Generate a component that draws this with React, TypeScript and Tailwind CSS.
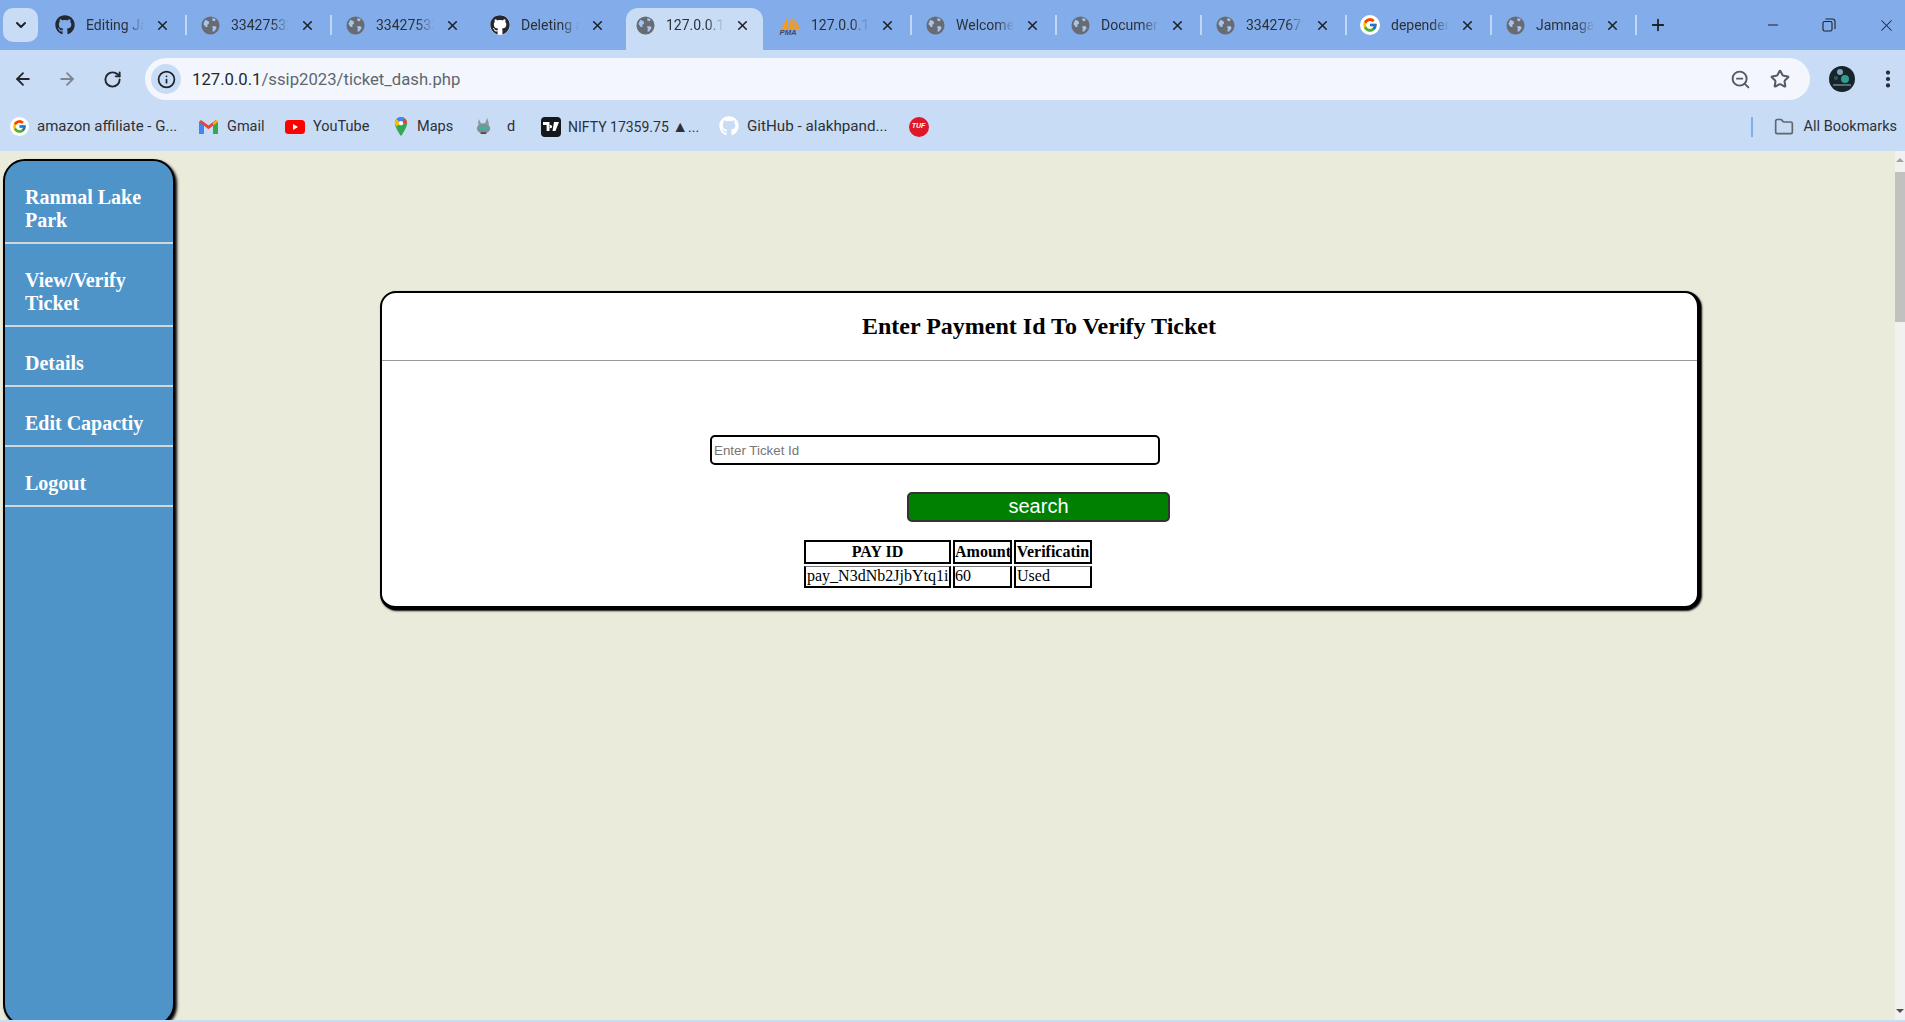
import { ArrowLeft, ArrowRight, RotateCw, Info, ZoomOut, Star, Folder, EllipsisVertical, X, Plus, Minus, ChevronDown } from "lucide-react";
import { FaGithub } from "react-icons/fa";
import { FcGoogle } from "react-icons/fc";

function Globe() {
  return (
    <svg viewBox="0 0 20 20" className="h-[19px] w-[19px] shrink-0">
      <circle cx="10" cy="10" r="9.5" fill="#686c72" />
      <path d="M4.5 4 8 5.5 8.5 8 6.5 9.5 7 11.5 5 11.5 2.5 8.5ZM12 2 15.5 3.5 14.5 5.5 12 5ZM11.5 11 15 10.5 16.5 12.5 13.5 16.5 12 16 12.5 13.5Z" fill="#a9c4ec" />
    </svg>
  );
}

function TabGithub() {
  return (
    <span className="flex h-[20px] w-[20px] shrink-0 items-center justify-center rounded-full bg-white">
      <FaGithub className="h-[20px] w-[20px] text-[#24292f]" />
    </span>
  );
}

function TabGoogle() {
  return (
    <span className="flex h-[20px] w-[20px] shrink-0 items-center justify-center rounded-full bg-white">
      <FcGoogle className="h-[16px] w-[16px]" />
    </span>
  );
}

function Pma() {
  return (
    <svg viewBox="0 0 20 20" className="h-[22px] w-[22px] shrink-0">
      <path d="M2 14 8 2 8.5 14ZM9 14 11.5 0 13.5 14ZM14 14 14 4 19.5 14Z" fill="#f39a1f" />
      <text x="0.5" y="19.5" fontSize="7" fontWeight="700" fontStyle="italic" fontFamily="Liberation Sans" fill="#3a4a70">PMA</text>
    </svg>
  );
}

const TABS = [
  { title: "Editing Jamnagar", icon: <FaGithub className="h-[20px] w-[20px] shrink-0 text-[#24292f]" />, sep: true },
  { title: "33427532", icon: <Globe />, sep: true },
  { title: "33427533", icon: <Globe />, sep: false },
  { title: "Deleting a", icon: <TabGithub />, sep: false },
  { title: "127.0.0.1", icon: <Globe />, sep: false, active: true },
  { title: "127.0.0.1", icon: <Pma />, sep: true },
  { title: "Welcome", icon: <Globe />, sep: true },
  { title: "Document", icon: <Globe />, sep: true },
  { title: "33427671", icon: <Globe />, sep: true },
  { title: "dependen", icon: <TabGoogle />, sep: true },
  { title: "Jamnagar", icon: <Globe />, sep: true },
];

const SIDE_LINKS = [
  "Ranmal Lake Park",
  "View/Verify Ticket",
  "Details",
  "Edit Capactiy",
  "Logout",
];

function TabBar() {
  return (
    <div className="flex h-[50px] items-end bg-[#83adea] pl-[3px] text-[#2c3138]">
      <div className="mb-[8px] mr-[4px] flex h-[34px] w-[35px] items-center justify-center rounded-[10px] bg-[#c9dcf6]">
        <ChevronDown className="h-[16px] w-[16px] text-[#1f2329]" strokeWidth={3} />
      </div>
      {TABS.map((tab, i) => (
        <div key={i} className="relative flex h-[42px] w-[145px] shrink-0 items-center pb-[8px]">
          {tab.active && (
            <div className="absolute inset-y-0 left-[4px] right-[4px] rounded-t-[12px] bg-[#c9dcf6]" />
          )}
          <div className="relative ml-[13px] flex w-[128px] items-center">
            <span className="flex w-[20px] justify-center">{tab.icon}</span>
            <span className="ml-[11px] w-[58px] overflow-hidden whitespace-nowrap text-[14px] [mask-image:linear-gradient(to_right,black_70%,transparent)]">
              {tab.title}
            </span>
            <X className="ml-[11px] h-[15px] w-[15px] shrink-0 text-[#20242a]" strokeWidth={2.6} />
          </div>
          {tab.sep && <div className="absolute right-0 top-[7px] h-[20px] w-[2px] bg-[#c2d6f5]" />}
        </div>
      ))}
      <div className="mb-[8px] ml-[12px] flex h-[34px] items-center">
        <Plus className="h-[18px] w-[18px] text-[#1f2329]" strokeWidth={2.4} />
      </div>
      <div className="mb-[8px] ml-auto flex h-[34px] items-center gap-[41px] pr-[9px]">
        <Minus className="h-[16px] w-[16px] text-[#1f2329]" strokeWidth={1.6} />
        <svg viewBox="0 0 14 14" className="h-[14px] w-[14px]" fill="none" stroke="#1f2329" strokeWidth="1.1">
          <rect x="1" y="3.5" width="9" height="9.5" rx="1.5" />
          <path d="M3.5 1h7a2.5 2.5 0 0 1 2.5 2.5V11" />
        </svg>
        <X className="h-[19px] w-[19px] text-[#1f2329]" strokeWidth={1.3} />
      </div>
    </div>
  );
}

function Toolbar() {
  return (
    <div className="flex h-[50px] items-end bg-[#c9dcf6]">
      <div className="mb-[11px] flex w-[145px] items-center pl-[13px] text-[#23272d]">
        <ArrowLeft className="h-[20px] w-[20px]" strokeWidth={2.2} />
        <ArrowRight className="ml-[24px] h-[20px] w-[20px] text-[#7f8691]" strokeWidth={2.2} />
        <RotateCw className="ml-[26px] h-[19px] w-[19px]" strokeWidth={2.4} />
      </div>
      <div className="flex h-[42px] w-[1665px] items-center rounded-full bg-[#f3f7fd] pl-[6px]">
        <span className="flex h-[30px] w-[30px] items-center justify-center rounded-full bg-[#c9dcf6]">
          <Info className="h-[19px] w-[19px] text-[#1f2329]" strokeWidth={2.2} />
        </span>
        <span className="ml-[11px] pt-[1px] font-['Roboto',sans-serif] text-[16.7px] text-[#5f6670]">
          <span className="text-[#23272d]">127.0.0.1</span>/ssip2023/ticket_dash.php
        </span>
        <ZoomOut className="ml-auto h-[21px] w-[21px] text-[#555a61]" strokeWidth={2.2} />
        <Star className="ml-[19px] mr-[20px] h-[20px] w-[20px] text-[#555a61]" strokeWidth={2.4} />
      </div>
      <svg viewBox="0 0 26 26" className="mb-[8px] ml-[19px] h-[26px] w-[26px]">
        <circle cx="13" cy="13" r="13" fill="#16242b" />
        <circle cx="16" cy="13" r="4" fill="#2f9c8f" />
        <circle cx="11" cy="6" r="3" fill="#7fa2b4" />
        <rect x="4" y="18" width="18" height="2" fill="#5a6b73" />
        <circle cx="7" cy="12" r="2" fill="#33535f" />
      </svg>
      <EllipsisVertical className="mb-[10px] ml-[22px] h-[22px] w-[22px] text-[#23272d]" strokeWidth={2.6} />
    </div>
  );
}

function BookmarkBar() {
  return (
    <div className="flex h-[51px] items-center bg-[#c9dcf6] pt-[2px] text-[14.5px] text-[#2c3138]">
      <div className="ml-[10px] flex w-[189px] items-center gap-[8px]">
        <span className="flex h-[19px] w-[19px] items-center justify-center rounded-full bg-white">
          <FcGoogle className="h-[15px] w-[15px]" />
        </span>
        <span className="whitespace-nowrap text-[15px]">amazon affiliate - G...</span>
      </div>
      <div className="flex w-[86px] items-center gap-[9px]">
        <svg viewBox="0 0 20 16" className="h-[15px] w-[19px]">
          <path d="M0 3 2 1 10 7 18 1 20 3V16H15V7L10 11 5 7V16H0Z" fill="#ea4335" />
          <path d="M0 3V14.5A1.5 1.5 0 0 0 1.5 16H5V7Z" fill="#4285f4" />
          <path d="M20 3V14.5A1.5 1.5 0 0 1 18.5 16H15V7Z" fill="#34a853" />
          <path d="M15 7 20 3 19 1 15 4Z" fill="#fbbc04" />
        </svg>
        <span>Gmail</span>
      </div>
      <div className="flex w-[109px] items-center gap-[8px]">
        <svg viewBox="0 0 20 14" className="h-[14px] w-[20px]">
          <rect width="20" height="14" rx="3.5" fill="#ff0000" />
          <path d="M8 4v6l5-3Z" fill="#fff" />
        </svg>
        <span>YouTube</span>
      </div>
      <div className="flex w-[81px] items-center gap-[9px]">
        <svg viewBox="0 0 14 20" className="h-[19px] w-[14px]">
          <path d="M7 0A6.5 6.5 0 0 0 .5 6.5C.5 11 7 20 7 20s6.5-9 6.5-13.5A6.5 6.5 0 0 0 7 0Z" fill="#34a853" />
          <path d="M2.3 2 7 6.5 2 10A6.5 6.5 0 0 1 2.3 2Z" fill="#fbbc04" />
          <path d="M2.3 2A6.5 6.5 0 0 1 7 0C8.5 0 9.8.5 10.8 1.3L7 6.5Z" fill="#4285f4" />
          <path d="M10.8 1.3A6.5 6.5 0 0 1 13.5 6.5L7 6.5Z" fill="#ea4335" />
          <circle cx="7" cy="6.5" r="2.3" fill="#fff" />
        </svg>
        <span>Maps</span>
      </div>
      <div className="flex w-[66px] items-center gap-[15px]">
        <svg viewBox="0 0 18 18" className="h-[17px] w-[17px]">
          <path d="M4 1 7 7H3ZM13 0 15 7H10Z" fill="#8e9a9e" />
          <ellipse cx="9" cy="11" rx="7" ry="5.5" fill="#7f9090" />
          <rect x="4" y="9" width="10" height="3" rx="1.5" fill="#3bb3a3" />
          <path d="M6 15h6v2H6Z" fill="#5a4a44" />
        </svg>
        <span>d</span>
      </div>
      <div className="flex w-[178px] items-center gap-[7px]">
        <span className="flex h-[20px] w-[20px] items-center justify-center rounded-[4px] bg-[#14171c]">
          <svg viewBox="0 0 16 10" className="h-[10px] w-[16px]">
            <path d="M0 0H6.5V9H3.6V3H0ZM7.5 3a1.6 1.6 0 1 0 .01 0ZM11 0H16L12.5 9H9.5Z" fill="#fff" />
          </svg>
        </span>
        <span className="whitespace-nowrap text-[14px]">
          NIFTY 17359.75 <span className="text-[16px]">▲</span>...
        </span>
      </div>
      <div className="flex items-center gap-[8px]">
        <FaGithub className="h-[20px] w-[20px] text-white" />
        <span className="whitespace-nowrap text-[15.2px]">GitHub - alakhpand...</span>
      </div>
      <span className="ml-[21px] flex h-[20px] w-[20px] items-center justify-center rounded-full bg-[#e0162b] font-['Liberation_Sans',sans-serif] text-[7px] font-bold italic text-white">
        TUF
      </span>
      <div className="ml-auto h-[20px] w-[2px] bg-[#83adea]" />
      <Folder className="ml-[21px] h-[20px] w-[20px] text-[#5f6670]" strokeWidth={2} />
      <span className="ml-[10px] mr-[8px]">All Bookmarks</span>
    </div>
  );
}

function Sidebar() {
  return (
    <aside className="ml-[3px] mt-[8px] h-[867px] w-[172px] shrink-0 rounded-[22px] border-2 border-black bg-[#4e94c9] shadow-[2px_2px_3px_#000]">
      {SIDE_LINKS.map((link) => (
        <div key={link} className="border-b-2 border-[#d2d7da] px-[20px] pb-[10px] pt-[25px] text-[20px] font-bold leading-[23px] text-white">
          {link}
        </div>
      ))}
    </aside>
  );
}

function VerifyCard() {
  return (
    <div className="ml-[205px] mt-[140px] h-[319px] w-[1321px] shrink-0 rounded-[16px] border-x-2 border-y-2 border-b-4 border-r-4 border-black bg-white shadow-[1px_1px_2px_#000]">
      <h2 className="flex h-[68px] items-center justify-center border-b border-[#999] pb-[2px] pr-[1px] text-[24px] font-bold">
        Enter Payment Id To Verify Ticket
      </h2>
      <input
        placeholder="Enter Ticket Id"
        className="ml-[328px] mt-[74px] block h-[30px] w-[450px] rounded-[5px] border-2 border-black px-[2px] font-['Liberation_Sans',sans-serif] text-[13.33px] outline-none placeholder:text-[#757575]"
      />
      <button className="ml-[525px] mt-[27px] block h-[30px] w-[263px] rounded-[5px] border-2 border-[#333] bg-[#008000] pb-[2px] font-['Liberation_Sans',sans-serif] text-[20px] leading-none text-white">
        search
      </button>
      <table className="ml-[420px] mt-[16px] w-[292px] table-fixed border-separate border-spacing-[2px] text-[16px] leading-[18px]">
        <colgroup>
          <col className="w-[147px]" />
          <col className="w-[59px]" />
          <col className="w-[78px]" />
        </colgroup>
        <thead>
          <tr className="h-[24px]">
            <th className="overflow-hidden whitespace-nowrap border-2 border-black px-0 font-bold">PAY ID</th>
            <th className="overflow-hidden whitespace-nowrap border-2 border-black px-0 font-bold">Amount</th>
            <th className="overflow-hidden whitespace-nowrap border-2 border-black px-0 font-bold">Verificatin</th>
          </tr>
        </thead>
        <tbody>
          <tr className="h-[22px]">
            <td className="overflow-hidden whitespace-nowrap border-2 border-t border-black border-t-[#777] pb-[1px] pl-[1px]">pay_N3dNb2JjbYtq1i</td>
            <td className="overflow-hidden whitespace-nowrap border-2 border-t border-black border-t-[#777] pb-[1px] pl-0">60</td>
            <td className="overflow-hidden whitespace-nowrap border-2 border-t border-black border-t-[#777] pb-[1px] pl-[1px]">Used</td>
          </tr>
        </tbody>
      </table>
    </div>
  );
}

export default function App() {
  return (
    <div className="flex h-[1022px] flex-col overflow-hidden bg-[#c9dcf6] font-['Roboto',sans-serif]">
      <TabBar />
      <Toolbar />
      <BookmarkBar />
      <div className="flex h-[869px] overflow-hidden bg-[#ebebdc] font-['Liberation_Serif',serif] text-black">
        <div className="flex flex-1">
          <Sidebar />
          <VerifyCard />
        </div>
        <div className="flex w-[10px] flex-col items-center bg-[#f1f1f1]">
          <div className="mt-[7px] h-0 w-0 border-x-[4px] border-b-[4px] border-x-transparent border-b-[#a3a3a3]" />
          <div className="mt-[10px] h-[150px] w-full bg-[#c1c1c1]" />
          <div className="mb-[7px] mt-auto h-0 w-0 border-x-[4px] border-t-[4px] border-x-transparent border-t-[#505050]" />
        </div>
      </div>
    </div>
  );
}
